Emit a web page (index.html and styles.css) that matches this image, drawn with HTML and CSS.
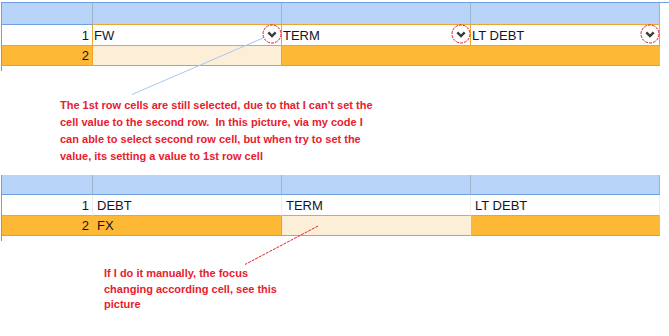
FILE: index.html
```html
<!DOCTYPE html>
<html>
<head>
<meta charset="utf-8">
<link rel="stylesheet" href="styles.css">
</head>
<body>
<div class="page">
  <div class="grid g1">
    <div class="cell hd rh"></div>
    <div class="cell hd sel-top"></div>
    <div class="cell hd sel-top"></div>
    <div class="cell hd sel-top"></div>

    <div class="cell r1 rh">1</div>
    <div class="cell r1 edit">FW<svg class="dd" viewBox="0 0 20 20" width="20" height="20"><circle cx="10" cy="10" r="9" /><path d="M6.3 8.3 L10 12 L13.7 8.3" /></svg></div>
    <div class="cell r1 edit">TERM<svg class="dd" viewBox="0 0 20 20" width="20" height="20"><circle cx="10" cy="10" r="9" /><path d="M6.3 8.3 L10 12 L13.7 8.3" /></svg></div>
    <div class="cell r1 edit">LT DEBT<svg class="dd" viewBox="0 0 20 20" width="20" height="20"><circle cx="10" cy="10" r="9" /><path d="M6.3 8.3 L10 12 L13.7 8.3" /></svg></div>

    <div class="cell r2 rh">2</div>
    <div class="cell r2 cur"></div>
    <div class="cell r2"></div>
    <div class="cell r2"></div>
  </div>

  <p class="note n1">The 1st row cells are still selected, due to that I can't set the<br>cell value to the second row.&nbsp; In this picture, via my code I<br>can able to select second row cell, but when try to set the<br>value, its setting a value to 1st row cell</p>

  <div class="grid g2">
    <div class="cell hd rh"></div>
    <div class="cell hd"></div>
    <div class="cell hd"></div>
    <div class="cell hd"></div>

    <div class="cell r1 rh">1</div>
    <div class="cell r1">DEBT</div>
    <div class="cell r1">TERM</div>
    <div class="cell r1">LT DEBT</div>

    <div class="cell r2 rh">2</div>
    <div class="cell r2">FX</div>
    <div class="cell r2 cur"></div>
    <div class="cell r2"></div>
  </div>

  <p class="note n2">If I do it manually, the focus<br>changing according cell, see this<br>picture</p>

  <svg class="overlay" width="669" height="336" viewBox="0 0 669 336">
    <line class="blue" x1="263" y1="38" x2="132" y2="94.5" />
    <line class="red" x1="318" y1="226" x2="245" y2="264.5" />
  </svg>
</div>
</body>
</html>
```

FILE: styles.css
```css
html, body {
  margin: 0;
  padding: 0;
  background: #ffffff;
}

.page {
  position: relative;
  width: 669px;
  height: 336px;
  overflow: hidden;
  font-family: "Liberation Sans", Arial, sans-serif;
}

.grid {
  display: grid;
  grid-template-columns: 91px 189px 189px 189px;
  border-left: 1px solid #6f9fdd;
  margin-left: 1px;
  padding-bottom: 5px;
  font-size: 13px;
  color: #141428;
}

.g1 {
  margin-top: 2px;
  border-top: 1px solid #6f9fdd;
  grid-template-rows: 22px 21px 20px;
}

.g2 {
  margin-top: 10px;
  grid-template-rows: 20px 21px 20px;
}

.cell {
  position: relative;
  box-sizing: border-box;
  border-right: 1px solid #9db2cc;
  border-bottom: 1px solid #6f9fdd;
  display: flex;
  align-items: center;
  padding-left: 4px;
  white-space: nowrap;
}

.hd {
  background: #b8d4f8;
}

.g1 .hd.sel-top {
  border-bottom-color: #eea42e;
}

.rh {
  justify-content: flex-end;
  padding-left: 0;
  padding-right: 3px;
}

.r1 {
  background: #ffffff;
  border-bottom-color: #eaa43c;
  border-right-color: #f0f0f0;
}

.g1 .r1.rh {
  border-right-color: #eea42e;
}

.g1 .r1.edit {
  border-right-color: #eea42e;
  padding-left: 1px;
}

.r2 {
  background: #fdb936;
  border-bottom-color: #e59e2c;
  border-right-color: #fdb936;
}

.r2.rh {
  border-right-color: #f0a830;
}

.g1 .r2.rh {
  border-right-color: #eea42e;
}

.cur {
  background: #fdeed8;
  border-right-color: #eea42e;
}

.g2 .r2 {
  border-right-color: #fdb936;
}

.g2 .r2:nth-child(10) {
  border-right-color: #e8a030;
}

.g2 .r2.cur {
  border-right-color: #fdeed8;
}

.g2 .r1 {
  border-right-color: #eeeeee;
}

.g2 .r1.rh {
  border-right-color: #eeeeee;
}

.dd {
  position: absolute;
  right: -1px;
  top: -1px;
}

.dd circle {
  fill: none;
  stroke: #e41c24;
  stroke-width: 1;
  stroke-dasharray: 3 1;
}

.dd path {
  fill: none;
  stroke: #3a3a3a;
  stroke-width: 2.4;
}

.note {
  margin: 0;
  font-weight: bold;
  font-size: 11px;
  color: #e8202e;
}

.n1 {
  margin-top: 26px;
  padding-left: 60px;
  line-height: 17px;
}

.n2 {
  margin-top: 25px;
  padding-left: 104px;
  line-height: 15.5px;
}

.overlay {
  position: absolute;
  left: 0;
  top: 0;
  pointer-events: none;
}

.overlay .blue {
  stroke: #a8c8f0;
  stroke-width: 1;
}

.overlay .red {
  stroke: #e5222e;
  stroke-width: 1;
  stroke-dasharray: 3 1;
}
```
